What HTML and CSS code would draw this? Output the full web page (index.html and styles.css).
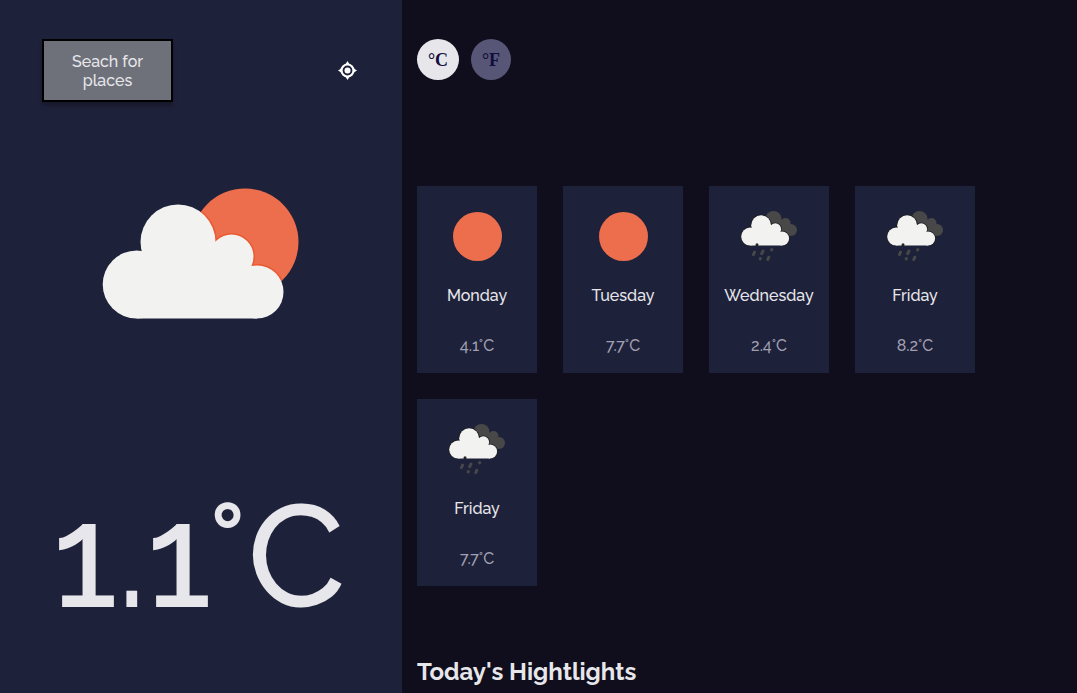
FILE: index.html
```html
<!DOCTYPE html>
<html lang="en">
<head>
<meta charset="utf-8">
<meta name="viewport" content="width=device-width, initial-scale=1">
<title>Weather</title>
<link rel="stylesheet" href="styles.css">
</head>
<body>
<svg class="defs" aria-hidden="true">
  <symbol id="sun" viewBox="0 0 50 52"><circle cx="25.500" cy="26.500" r="24.500" fill="#ec6e4c"/></symbol>
  <g id="cloud"><circle cx="34.700" cy="96.500" r="34"/><circle cx="76" cy="54" r="37.500"/><circle cx="129.500" cy="68.500" r="22"/><circle cx="155" cy="104" r="26.500"/><path d="M34.700 130.500V65H76V50h30l40 30 9 50.500z"/></g>
  <symbol id="rain" viewBox="0 0 58 52">
    <g fill="#484848"><circle cx="33.500" cy="9" r="8"/><circle cx="45.500" cy="13" r="5"/><circle cx="51" cy="20" r="6"/><path d="M33 9h8l6 5 3 12H38z"/></g>
    <use href="#cloud" transform="translate(1 1) scale(.265)" stroke="#1e1e24" stroke-width="6"/>
    <path d="M0 35.600h50v3H0z" fill="#1e213a"/>
    <use href="#cloud" transform="translate(1 1) scale(.265)" fill="#f2f2f0"/>
    <g stroke="#484848" stroke-width="3" stroke-linecap="round"><path d="M14.500 42.200l-1 2.300M23 41l-1.300 2.600M31.800 39.500l-.200.400M20.400 48.500l-.200.400M28.800 47.200l-1 2.300"/></g>
    <circle cx="17" cy="34.700" r="1.500" fill="#222"/>
  </symbol>
</svg>
<div class="app">
  <aside class="today">
    <div class="search">
      <button class="search-button" type="button">Seach for places</button>
      <button class="locate" type="button" aria-label="Use my location">
        <svg viewBox="0 0 20 20" fill="none" stroke="#fff"><circle cx="9.500" cy="9.500" r="6" stroke-width="2.200"/><circle cx="9.500" cy="9.500" r="3" fill="#fff" stroke="none"/><path d="M9.500 0L7 4h5zM9.500 19L7 15h5zM0 9.500L4 7v5zM19 9.500L15 7v5z" fill="#fff" stroke="none"/></svg>
      </button>
    </div>
    <svg class="today-icon" viewBox="0 0 198 132" role="img" aria-label="Partly cloudy">
      <clipPath id="sunclip"><circle cx="143" cy="54" r="53.500"/></clipPath>
      <circle cx="143" cy="54" r="53.500" fill="#ec6e4c"/>
      <g clip-path="url(#sunclip)"><use href="#cloud" stroke="#ea5a32" stroke-width="3"/></g>
      <use href="#cloud" fill="#f2f2f0"/>
    </svg>
    <p class="today-temp">1.1°C</p>
  </aside>
  <main class="forecast">
    <div class="units">
      <button class="unit-button active" type="button">°C</button>
      <button class="unit-button" type="button">°F</button>
    </div>
    <div class="days">
      <article class="day"><svg class="sun"><use href="#sun"/></svg><h2>Monday</h2><p>4.1°C</p></article>
      <article class="day"><svg class="sun"><use href="#sun"/></svg><h2>Tuesday</h2><p>7.7°C</p></article>
      <article class="day"><svg class="rain"><use href="#rain"/></svg><h2>Wednesday</h2><p>2.4°C</p></article>
      <article class="day"><svg class="rain"><use href="#rain"/></svg><h2>Friday</h2><p>8.2°C</p></article>
      <article class="day"><svg class="rain"><use href="#rain"/></svg><h2>Friday</h2><p>7.7°C</p></article>
    </div>
    <h1>Today's Hightlights</h1>
  </main>
</div>
</body>
</html>
```
FILE: styles.css
```css
* { box-sizing: border-box; }
body {
  margin: 0;
  background: #100e1d;
  color: #e7e7eb;
  font-family: Raleway, Lato, sans-serif;
  font-size: 16px;
  line-height: 20px;
}
h1, h2, p { margin: 0; }
button { font: inherit; cursor: pointer; }
.defs { position: absolute; width: 0; height: 0; }
.app {
  display: grid;
  grid-template-columns: 402fr 675fr;
  min-height: 100vh;
}
.today {
  display: flex;
  flex-direction: column;
  align-items: center;
  background: #1e213a;
}
.search {
  display: flex;
  justify-content: space-between;
  align-items: center;
  width: 100%;
  padding: 39px 44px 0 42px;
}
.search-button {
  width: 131px;
  height: 63px;
  padding: 0 20px;
  border: 2px solid #000;
  background: #6e707a;
  color: #e7e7eb;
  font-weight: 500;
  line-height: 19px;
  box-shadow: 0 4px 4px rgba(0, 0, 0, 0.25);
}
.locate {
  display: flex;
  padding: 0;
  border: 0;
  background: none;
}
.locate svg { width: 20px; height: 20px; }
.today-icon { width: 198px; height: 132px; margin-top: 86px; }
.today-temp {
  margin-top: 165px;
  padding-right: 4px;
  font-size: 144px;
  font-weight: 500;
  line-height: 144px;
  white-space: nowrap;
}
.forecast { padding: 39px 0 0 15px; }
.units { display: flex; gap: 12px; height: 41px; }
.unit-button {
  width: 40px;
  height: 41px;
  padding: 2px 0 0;
  border: 0;
  border-radius: 50%;
  background: #585676;
  color: #110e3c;
  font: bold 18px "Liberation Serif", serif;
}
.unit-button.active { width: 42px; background: #e7e7eb; }
.days {
  display: grid;
  grid-template-columns: repeat(auto-fill, 120px);
  gap: 26px;
  margin-top: 106px;
}
.day {
  display: flex;
  flex-direction: column;
  align-items: center;
  height: 187px;
  padding-top: 24px;
  background: #1e213a;
}
.day svg { height: 52px; }
.sun { width: 50px; }
.rain { width: 58px; }
.day h2 { margin-top: 24px; font-size: 16px; font-weight: 500; }
.day p { margin-top: 30px; color: #a09fb1; font-weight: 500; }
h1 { margin-top: 70px; font-size: 24px; line-height: 32px; font-weight: 700; }
```
